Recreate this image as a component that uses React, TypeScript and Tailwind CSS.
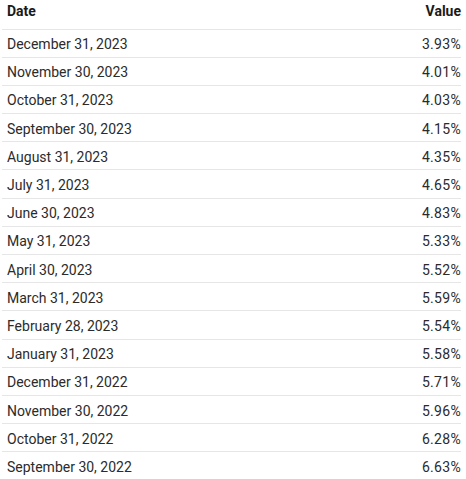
const rows: [string, string][] = [
  ["December 31, 2023", "3.93%"],
  ["November 30, 2023", "4.01%"],
  ["October 31, 2023", "4.03%"],
  ["September 30, 2023", "4.15%"],
  ["August 31, 2023", "4.35%"],
  ["July 31, 2023", "4.65%"],
  ["June 30, 2023", "4.83%"],
  ["May 31, 2023", "5.33%"],
  ["April 30, 2023", "5.52%"],
  ["March 31, 2023", "5.59%"],
  ["February 28, 2023", "5.54%"],
  ["January 31, 2023", "5.58%"],
  ["December 31, 2022", "5.71%"],
  ["November 30, 2022", "5.96%"],
  ["October 31, 2022", "6.28%"],
  ["September 30, 2022", "6.63%"],
];

export default function App() {
  return (
    <div className="w-[466px] h-[479px] overflow-hidden bg-white font-['Roboto',sans-serif] text-[14px] text-[#2b2b2b]">
      <div className="ml-[2px] mr-[5px]">
        <div className="flex h-[28.5px] items-start justify-between pl-[5px] pt-[1px] font-bold text-[#1a1a1a]">
          <span>Date</span>
          <span>Value</span>
        </div>
        {rows.map(([date, value]) => (
          <div
            key={date}
            className="flex h-[28.2px] items-center justify-between border-t border-[#e6e6e6] pl-[5px] pt-[3px]"
          >
            <span>{date}</span>
            <span className="tracking-[0.3px]">{value}</span>
          </div>
        ))}
      </div>
    </div>
  );
}
